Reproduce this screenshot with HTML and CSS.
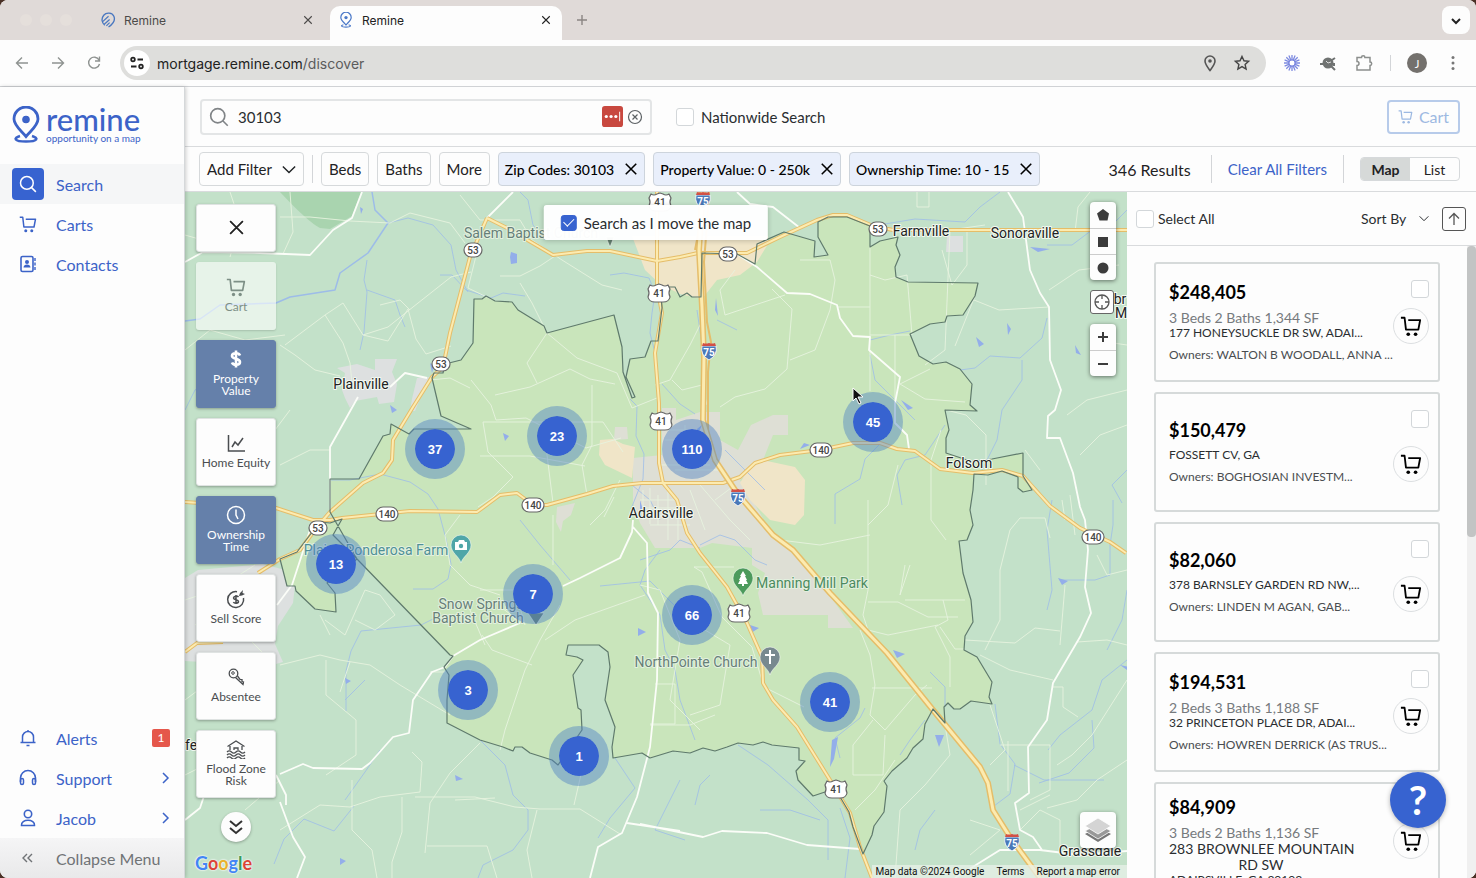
FILE: index.html
```html
<!DOCTYPE html>
<html lang="en">

<head>
    <meta charset="UTF-8">
    <meta name="viewport" content="width=device-width, initial-scale=1.0">
    <title>Remine</title>
    <link rel="stylesheet" href="styles.css">
</head>

<body>
    <!-- shared icons -->
    <svg class="defs" aria-hidden="true">
        <symbol id="i-cart" viewBox="0 0 24 24">
            <path d="M1 3h4l1.500 13h13.500l2-10.500H9" fill="none" stroke="currentColor" stroke-width="2" stroke-linejoin="round" />
            <circle cx="9" cy="21" r="2" fill="currentColor" />
            <circle cx="17" cy="21" r="2" fill="currentColor" />
        </symbol>
        <symbol id="i-close" viewBox="0 0 24 24">
            <path d="M3 3l18 18M21 3L3 21" fill="none" stroke="currentColor" stroke-width="2.600" />
        </symbol>
        <symbol id="i-search" viewBox="0 0 24 24">
            <circle cx="10.500" cy="10.500" r="8.500" fill="none" stroke="currentColor" stroke-width="2" />
            <path d="M16.500 16.500l6 6" stroke="currentColor" stroke-width="2" />
        </symbol>
        <symbol id="i-pin" viewBox="0 0 28 37">
            <path d="M14 30C9 24 2 19 2 12.500a12 12 0 0 1 24 0C26 19 19 24 14 30z" fill="none" stroke="currentColor" stroke-width="2.800" />
            <circle cx="14" cy="13" r="3.800" fill="currentColor" />
            <path d="M8 29.500c-7 2-6 5.500 6 5.500s13-3.500 6-5.500" fill="none" stroke="currentColor" stroke-width="2.600" />
        </symbol>
        <symbol id="i-down" viewBox="0 0 16 10">
            <path d="M1 1.500l7 7 7-7" fill="none" stroke="currentColor" stroke-width="1.600" />
        </symbol>
    </svg>

    <div class="window">
        <div class="tabs">
            <div class="lights"><span></span><span></span><span></span></div>
            <div class="tab">
                <svg class="tab-icon" viewBox="0 0 28 30"><path d="M8 25C2 20 1 12 6 6s16-5 19 2-1 14-10 20" fill="none" stroke="#4a78c0" stroke-width="2.500" /><path d="M4 18L15 8M7 23L17 14M11 26l6-6" stroke="#4a78c0" stroke-width="2.200" /></svg>
                <span>Remine</span>
                <button class="tab-close" aria-label="Close tab"><svg><use href="#i-close" /></svg></button>
            </div>
            <div class="tab tab-active">
                <svg class="tab-icon"><use href="#i-pin" /></svg>
                <span>Remine</span>
                <button class="tab-close" aria-label="Close tab"><svg><use href="#i-close" /></svg></button>
            </div>
            <button class="tab-new" aria-label="New tab"><svg viewBox="0 0 12 12"><path d="M6 1v10M1 6h10" stroke="#8b8583" stroke-width="1.400" /></svg></button>
            <button class="tab-menu" aria-label="Search tabs"><svg viewBox="0 0 10 7"><path d="M1 1l4 4 4-4" fill="none" stroke="#222" stroke-width="2" /></svg></button>
        </div>

        <div class="toolbar">
            <button aria-label="Back"><svg viewBox="0 0 20 20"><path d="M16 10H5M10 4.500L4.500 10l5.500 5.500" fill="none" stroke="#8f9391" stroke-width="1.400" /></svg></button>
            <button aria-label="Forward"><svg viewBox="0 0 20 20"><path d="M4 10h11M10 4.500l5.500 5.500-5.500 5.500" fill="none" stroke="#8f9391" stroke-width="1.400" /></svg></button>
            <button aria-label="Reload"><svg viewBox="0 0 20 20"><path d="M15 7a5.500 5.500 0 1 0 .5 4M15.500 3.500v4.500H11" fill="none" stroke="#8f9391" stroke-width="1.400" /></svg></button>
            <div class="address">
                <span class="site"><svg viewBox="0 0 16 16"><g fill="none" stroke="#222" stroke-width="1.800"><circle cx="4" cy="4.500" r="1.800" /><path d="M8.500 4.500H14M2 11.500h5.500" /><circle cx="12" cy="11.500" r="1.800" /></g></svg></span>
                <span class="url">mortgage.remine.com<i>/discover</i></span>
                <button aria-label="Location"><svg viewBox="0 0 20 20"><path d="M10 17.500C7 13.500 5 11 5 8a5 5 0 0 1 10 0c0 3-2 5.500-5 9.500z" fill="none" stroke="#555" stroke-width="1.600" /><circle cx="10" cy="8" r="1.800" fill="#555" /></svg></button>
                <button aria-label="Bookmark"><svg viewBox="0 0 20 20"><path d="M10 3.500l2 4.300 4.600.500-3.500 3.100 1 4.600L10 13.600 5.900 16l1-4.600-3.500-3.100 4.600-.5z" fill="none" stroke="#444" stroke-width="1.400" /></svg></button>
            </div>
            <button aria-label="Burst extension"><svg viewBox="0 0 20 20"><path d="M10 2v16M2 10h16M4.300 4.300l11.400 11.400M15.700 4.300L4.300 15.700M6.900 2.600l6.200 14.800M13.100 2.600L6.900 17.400M2.600 6.900l14.800 6.200M17.400 6.900L2.600 13.100" stroke="#7d8ae0" stroke-width="1.300" /><circle cx="10" cy="10" r="3" fill="#fff" stroke="#7d8ae0" /></svg></button>
            <button aria-label="Search extension"><svg viewBox="0 0 20 20"><circle cx="10" cy="10" r="5.500" fill="#707372" /><path d="M2 11h4M13 13l4 4M14 7l3-2M16 10v3" stroke="#707372" stroke-width="2" /><path d="M8 8l2 2 3-1" stroke="#ddd" fill="none" /></svg></button>
            <button aria-label="Extensions"><svg viewBox="0 0 20 20"><path d="M3 4.500h4.500a1.700 1.700 0 0 1 3.400 0H16V9a1.700 1.700 0 0 1 0 3.400V17H3v-4.500a2 2 0 0 0 0-4z" fill="none" stroke="#8c8f8d" stroke-width="1.500" /></svg></button>
            <span class="bar"></span>
            <button class="avatar" aria-label="Profile">J</button>
            <button aria-label="Menu"><svg viewBox="0 0 20 20" fill="#777"><circle cx="10" cy="4.500" r="1.500" /><circle cx="10" cy="10" r="1.500" /><circle cx="10" cy="15.500" r="1.500" /></svg></button>
        </div>

        <div class="app">
            <nav class="sidebar">
                <a class="logo" href="#">
                    <svg><use href="#i-pin" /></svg>
                    <span class="logo-text"><b>remine</b><small>opportunity on a map</small></span>
                </a>
                <a class="nav-item nav-active" href="#"><span class="nav-icon"><svg><use href="#i-search" /></svg></span>Search</a>
                <a class="nav-item" href="#"><span class="nav-icon"><svg><use href="#i-cart" /></svg></span>Carts</a>
                <a class="nav-item" href="#"><span class="nav-icon"><svg viewBox="0 0 18 18"><rect x="2" y="1.500" width="12" height="15" rx="1.500" fill="none" stroke="currentColor" stroke-width="1.600" /><circle cx="8" cy="7" r="2" fill="currentColor" /><path d="M4.500 12.500c0-4 7-4 7 0z" fill="currentColor" /><path d="M16 3v12" stroke="currentColor" stroke-width="1.400" stroke-dasharray="3 1.500" /></svg></span>Contacts</a>

                <a class="nav-item nav-bottom" href="#"><span class="nav-icon"><svg viewBox="0 0 18 18"><path d="M3.500 13V8a5.500 5.500 0 0 1 11 0v5M1.500 13.500h15M9 1v2M7.500 16.500h3" fill="none" stroke="currentColor" stroke-width="1.500" /></svg></span>Alerts<em class="badge">1</em></a>
                <a class="nav-item" href="#"><span class="nav-icon"><svg viewBox="0 0 18 18"><path d="M1.500 13V9a7.500 7.500 0 0 1 15 0v4" fill="none" stroke="currentColor" stroke-width="1.600" /><rect x="1.500" y="9.500" width="3" height="6" rx="1.500" fill="none" stroke="currentColor" stroke-width="1.500" /><rect x="13.500" y="9.500" width="3" height="6" rx="1.500" fill="none" stroke="currentColor" stroke-width="1.500" /></svg></span>Support<svg class="nav-arrow" viewBox="0 0 8 12"><path d="M1 1l5 5-5 5" /></svg></a>
                <a class="nav-item" href="#"><span class="nav-icon"><svg viewBox="0 0 18 18"><circle cx="9" cy="5" r="3.700" fill="none" stroke="currentColor" stroke-width="1.600" /><path d="M2.500 16.500c-1-7 14-7 13 0z" fill="none" stroke="currentColor" stroke-width="1.600" /></svg></span>Jacob<svg class="nav-arrow" viewBox="0 0 8 12"><path d="M1 1l5 5-5 5" /></svg></a>
                <button class="nav-item collapse"><span class="nav-icon"><svg viewBox="0 0 18 18"><path d="M8 5L4 9l4 4M13 5L9 9l4 4" fill="none" stroke="currentColor" stroke-width="1.400" /></svg></span>Collapse Menu</button>
            </nav>

            <main>
                <header class="search-row">
                    <div class="search-box">
                        <svg class="search-icon"><use href="#i-search" /></svg>
                        <input type="text" value="30103" aria-label="Search location">
                        <svg class="vault" viewBox="0 0 22 22"><rect width="22" height="22" rx="3" fill="#c8483f" /><g fill="#fff"><circle cx="4.500" cy="11" r="1.700" /><circle cx="9.500" cy="11" r="1.700" /><circle cx="14.500" cy="11" r="1.700" /><rect x="18" y="6" width="1" height="10" /></g></svg>
                        <button class="clear" aria-label="Clear search"><svg viewBox="0 0 16 16"><g fill="none" stroke="#5c6164" stroke-width="1.200"><circle cx="8" cy="8" r="6.500" /><path d="M5.500 5.500l5 5M10.500 5.500l-5 5" /></g></svg></button>
                    </div>
                    <label class="check nationwide"><input type="checkbox">Nationwide Search</label>
                    <button class="cart-btn"><svg><use href="#i-cart" /></svg>Cart</button>
                </header>

                <div class="filters">
                    <button class="filter add-filter">Add Filter<svg><use href="#i-down" /></svg></button>
                    <span class="bar"></span>
                    <button class="filter">Beds</button>
                    <button class="filter">Baths</button>
                    <button class="filter">More</button>
                    <button class="filter chip">Zip Codes: 30103<svg><use href="#i-close" /></svg></button>
                    <button class="filter chip">Property Value: 0 - 250k<svg><use href="#i-close" /></svg></button>
                    <button class="filter chip">Ownership Time: 10 - 15<svg><use href="#i-close" /></svg></button>
                    <div class="filters-right">
                        <span class="results">346 Results</span>
                        <span class="bar"></span>
                        <a class="clear-all" href="#">Clear All Filters</a>
                        <span class="bar"></span>
                        <div class="toggle"><button class="on">Map</button><button>List</button></div>
                    </div>
                </div>

                <div class="content">
                    <section class="map">
                        <svg class="map-svg" viewBox="185 192 942 686" preserveAspectRatio="xMidYMid slice">
                            <defs>
                                <path id="zip" d="M330 512V479h29l24-43 7-2 1-10 18 10 5-5h57l-30-13-9-38 2-5h9l2-9 16-4 12-17 1-44h8l4-3 9 5 17 1 6 8 26 16 3 7 67-18 8 32 1 25 9 26 3-1-9-20 4-18 15-2 6-16h7l4-33-1-13 8-8h6l5 10 7-4 5 4 9 0 1-44 35 1 18 10 2-20 27-12 31 9-1 16 14-2-10-18v-15l10-5h19l23 9v21l10-6 18-4-2 8 4 10-5 12 1 10 12 5 70 1-3 13-12 19-16 1-2 6-15 2-20 10 9 22 14 8 13-2 14 7 12 15-2 21 7 6-32-1 4 20-3 8v15l27 9 19-3 31-6v23l9 14-9 2-5-4v-11l-16-6-14 4-14-1-1 16-3 20 3 15-6 15-8 1 4 32 8 27 2 22-8 14-1 14 13 7 15 25-3 15 3 7-21-3-11 8h-6l-6-6-4 4 1 16-12-14-8 15-2 15-10 9-6 10-15 13-8 10 3 5-3 26-10 14-2 9-9 19-10-27-4-15-16-27-8 7-12 4-15-16-2-9 9-10-6-1v-12l-27-3-9-3-10 3-15-2-11 4-12 4-12-3-13 5-17-2-23 7-8-5-29 5-1-11 3-20-10-27 5-33-2-15-9-7h-31l-2 10 11 2 6 3-10 15 5 33 3 2 1 20-24 35-6-5-22-7-8-6h-7l-2 4-10-4-23-7-33-17v-23l2-25-5-8 9-11-3-1-93-96-24-24 9-16-12 4-10-1-10 13-13 17-17 7 7 27h8l1 5 19 18 21 3-1-19-8-10 30-24z" />
                                <path id="hw" d="M487 218l-17 39-20 76-7 34-11 10-19 30-20 33-1 20-9 13-20 10-33 29-13 15-17 23-20 9-22 14M185 502l91 6 37 12h17l12-2 68-7 67 1 23-17 17-2 16 12h14l40-11 26-8 29-3h81l17-6 15-14 25-8 40-5 33-7h27l17 6 18 2 25 18 33 4 29-3 21 6 27 30 30 22 30 14 16 11M185 652l12-9 26-1M487 218l20 10 46 27 34-4h23l47 10 23-4 18-4h49l33-16 37-17 16-5h14l26 11 20 4h234M657 190v97l5 26-7 40 4 50v60l4 20 14 17 10 33 13 20 27 34 20 36 15 34 1 26 10 17 24 27 33 53 20 33 10 34 12 31" />
                                <path id="i75" d="M703 190l-4 60 3 57 2 50-1 63 12 40 22 33 36 42 20 15 37 43 57 60 46 57 47 57 8 16 5 27 17 27 30 41" />
                                <path id="us" d="M-9-8q3 2 6 0l3-1 3 1q3 2 6 0l2 4q-2 4 0 8-1 5-7 5H-4q-6 0-7-5 2-4 0-8z" fill="#fff" stroke="#666" stroke-width="1.200" />
                                <rect id="st" x="-9" y="-7" width="18" height="14" rx="7" fill="#fff" stroke="#666" stroke-width="1.200" />
                                <rect id="st3" x="-11" y="-7" width="22" height="14" rx="7" fill="#fff" stroke="#666" stroke-width="1.200" />
                                <g id="is"><path d="M-7-5h14q2 9-7 14-9-5-7-14z" fill="#4a78b8" stroke="#fff" stroke-width=".8" /><path d="M-6-8q3 1 6 0 3 1 6 0l1 3H-7z" fill="#d25046" /></g>
                            </defs>
                            <rect x="185" y="192" width="942" height="686" fill="#c3e1c9" />
                            <path d="M280 192h81l-9 24-22 13-10-1q-12-6-40-36z" fill="#a9d4af" />

                            <!-- built-up areas -->
                            <g fill="#dde0e0">
                                <path d="M375 359h22l-5 13 5 12-3 18-15 2-2-7-22 4-5 7-5-10-3-8 3-17-8-5 20-4 18 6zM417 378l12-1-14 34h-5l2-12z" />
                                <path d="M185 578l13-8 65-6 22 6 10 15-2 18-15 23-3 18 8 18-14 4-84-5zM947 236h16v16h-17z" />
                            </g>

                            <use href="#zip" class="zip-area" />
                            <g fill="#dedfd5">
                                <path d="M633 458l29-3V408h14v12l24-8h20v28l18 10 13-25 22-10h15v20h-15l-10 25-23 20 20 33 13 25 20 15 37 43 23 32h-25v-13h-65l-5-22 7-20-13-8v-17l-40-5-12 5h-45l-15-25-7-20zM557 507l18-4-4 12-8 6-2 11-5-10z" />
                                <path d="M615 427h12l1 12-14 1z" />
                            </g>
                            <g fill="#f0e5c8">
                                <path d="M752 463l15-2 28 6 10 13-1 35-9 10-25-5-20-20-10-17zM600 440l13-1 10 5 12 3-3 31-27-13-6-10zM632 236h136v8l-11 18-17 13-23 5-15 19-22-5-20-10-15-14z" />
                            </g>

                            <!-- water -->
                            <g class="river">
                                <path d="M372 192l3 18 13 13-20 30-28 20-5 17-45 7-14 6-56 2-20 14-15 2" stroke-width="1.500" />
                                <path d="M388 223l20-5 25 7 18 20 5 25 12 22M367 260l-3 20 3 12-3 40-4 18M367 290l28 10 5 15 5 12M440 275l12 0 14 15 25 8 12-5 22 3M185 410l10-20 25-15 15 10M520 192l8 8 5 25 12 15M610 275l14-2 25 5 6 15-3 20-2 20 5 20M630 399l7 7-1 30 8 18-1 25-12 30M330 480h20l30-6 30 8 18 12 10 15 8 30 5 25-3 15-15 10h-20M662 384l18 20 15 10M660 520l-10-20-18-15M441 615l-20 10-60 6-10 20-5 20 0 40M345 700l20-20M345 800l20-28 15-22M354 806l-20 25-30-12-20 20-10 25M480 740l25 25 8 30 15 15 0 20-15 20-30 15-5 13M615 758l20 30-25 30-12 20M680 780l-25 50 30 10M737 330l-20-10M702 345l-5-35M870 340l20-5 20-4 0 0M870 355l5 25 20 20 20 20M1000 192l-20 15-15 15-50-3-30 5M1127 210l-20 20-15 0-20 15-25 0M1047 318l-5 20-22 20-30-2-15 12-15 2M1022 360l0 20-20 30-5 30-15 30M1127 470l-15 15 10 18M1113 500l0 25-3 20 0 30-15 5h-35M1127 590l-5 30-15 30M1052 500l-5 30 5 60-5 20M880 444l-15 15-5 20-25 15 0 30M945 425l-20 30-20 5-8 15 5 30M930 672l15 15 0 20M900 755l10-15 15-20M995 704l5 40 15 20-5 30-20 15M1014 765l30 15 60 0M1127 660l-25 20-10 30-32 25-12 15M1092 720l2 28-25 25-30 10M738 745l30 20 40 35 20 20 0 40M695 805l5-20 10-10M760 810l30 0 30 10M845 878l5-40-10-30M915 850l5-20 15-20M700 545l20-10 15 5 20 20 12 5M640 560l30-10 10-10 20 8M660 550l-15 20-5 15 20 30 5 35 10 20 5 30 15 40M840 758l-5-20 25-20 5-10M725 450l40 40M600 586l50-5 25 25M520 520l20 25 30 35" />
                            </g>
                            <g fill="#93aeea">
                                <path d="M511 252l6 2v9l-6 1-1-7zM716 298l2 18-3-6zM702 425l-5 4 1 5zM1007 323l4 6-3 6zM976 337l8 7-5 3zM935 735h9l-5 12zM1058 578l10 3-6 4zM1030 247l20 2-12 3zM893 650l12 4-8 4zM360 207l3 2-2 5zM503 433l6 3-4 5zM832 740l6-3-4 22-4 8zM638 628l8 4-8 4zM750 625l9 3-8 5zM390 405l7 5-5 3zM430 363l4 3-2 7zM540 255l3 2zM901 400l12 8-5 2zM1120 665l10 2v5zM345 678l6 3-5 3zM340 858l6 3-6 4zM455 775l8 4-7 2zM800 449l4-6 6 2zM196 528l8 3-6 6zM1075 345l6 10-5-2zM640 500l3 10-3 2zM1079 340l2 8z" />
                            </g>

                            <!-- minor roads -->
                            <g class="minor">
                                <path d="M280 217h30l40 4 40 2 20-10 40 10 15 20M290 192l3 40-10 22M325 315l18-12 20 32 25-8 25-20 38-30 20-5M325 315l18 28 7 20 2 20M285 345l40-30M280 345l15 10 20 15 25 6M363 335l25 6 20-32 8 30 10 15 25-8M410 310l-10-10-20 5M460 195l20 25 40 0 12 20 30 20 40 25 20 5M478 248l-10 40 25 12M500 276h20l20-10 15-10M547 333l-15-30-12-20M547 333l30 25 40 15 15 35 25-10M547 333l-20 30 10 20M471 380l20 25 5 15 30-2 60 30 35-10M495 395l35-8 40-18 20 10 25 5M430 380l20-2 20 10M483 422h60l60 0 20 30M483 422l5 30 25 25-20 20-15 10M480 456h50l55 10M592 385l0 60-10 20 5 30M330 450h-20l-20 10-10 5M543 423l10 80M553 515l0 50M460 515l-15 20 5 30 20 20 30 10M480 590h35l10 35M470 610l15 35M560 605l-20 35-15 30-20 60-5 20M545 640l30-20 70-25M482 635l10 15 40 15M498 605l20 15M445 672h-15M320 615l10 20M325 620l20 15 20-45 15 5 15 20-20 15-20-10M280 665l40-10 20 5 30 5 30 20 50 30M326 660l0 35 30 25 0 35-30 20M340 692l10-30M352 780v50l20 20 5 28M280 830l40-25 30 2 30-10 40-5 2-30-10-10M480 743l-30 30-20 30-5 50M402 797v35l-10 30v16M415 797h60l40 10 25 2 40 0 40 25M537 810l-10 40 5 28M582 770l-8 35M427 846h60l10 32M455 800l40-2M705 315l-15 30-20 35-15 5M672 380l10 10 20-5 5 20M720 407l15-10 30-8 22-20 5-60-20-20M785 295l-60 20-5-25 15-20M800 260h30l5 20-5 30-15 40-25 10M870 246v145M870 275l15 5 22-5 5 60M870 335h40M838 307h32M895 335v70M900 384l30-15M900 384l25 15 40 3M985 225l-35 5-5 120-20 15M942 250l10 35 15-20 0-35M917 192v15h12v-15M1049 307l-50 3-25-10M1049 290l30-20 40-5M975 296l-20 50M946 410l20 5 20 20 0 50M1040 470l-15-20M946 540l-15-20 0-60 10-30M868 500v90l-5 25 5 15 20 5 50-10M868 602h30l30 15 30 0M868 525l20-20 10-40M780 540l40 5 50-10M905 565l-5 30 10-30M943 600l5 20-13 7 15 30v30M905 600h60M940 627l15 22h9M860 630l10 25 5 30-5 30 15 15 30-35 12-10M872 688h60M873 720l-20 25 0 30h30l2-40M702 572l-8-5 40 0M702 572l20 45 30 30 12 40 40 20M640 585l20 5 20 50-10 60 30 30M655 684h20v40h-25M705 630l25 15-10 60-30 10M650 725h40l25-10M620 480l-15 30-15 15M614 497l-10 20M965 640l50 3 20-15 25 3M980 655l30 15 43 10M1053 687h10v20l15 10M990 705l15 45-15 15M1000 745h50v45l-20 10M1008 741l0 50M1020 810l30-15M895 760l-20 30-20 20M945 725l5 30-25 30-25 25-5 68M970 820l30 10-30 25M1020 830l20-20 20 10 0 30M1080 455l20-20 27-10M1127 570l-20 5-10-20M1127 645l-20-5-30 2M1127 680l-35 55-20 20-15 10M1127 760l-30 20-20 20-30 8M1070 495l5 40M985 650l15-30 0-50 10-40 10-12 25 0 5 20M1065 585l-5 60M1062 500l3 20M185 235l35 10 55-15M230 192l10 30-10 35M185 350l25-20 35 10 40-5M260 450l30-40M185 600l30-10 40-25M195 625l50-45M250 640l20 20M185 700l20-15 25-20M185 775l30-15 25-30M245 810l35-30M1090 192l-12 15-3 25M1127 345l-20-3-7 20M1127 390l-40 10-20 15" />
                                <path d="M643 490v30M650 488v36M658 495v30M668 490v50M678 515v25M640 500h35M642 508h38M642 516h40M650 525h40M690 490l15 40M700 485l30 35 20 20M735 485l-20 15M685 425v30M665 430h30M665 440h28M660 465h50M675 470h45" />
                            </g>
                            <g class="white-road">
                                <path d="M487 218l26-26M185 262l18-10 57 1 50 2 23-25 19-12 10-26M737 192l13 12 23 3 27 21M737 254l20 13 30 26 23 1 27 11 3 13 13 18 17 1-1 13 31 27-5 26v20l12 12 2 14M1008 192l15 25 7 53 10 23 9 14 1 53 11 30-6 20-7 6-1 22h13l13 35 7 34 5 13 3 30-3 37 6 26-11 24-27 46-6 37-19 27 1 46-14 10 5 27 13 7 9 13M955 878l45-28h40l40 5 47-4M640 824l63 13 19-6 45 2 40 12 53 4M590 878l8-31 24-14 15-36 13-50 7-67 1-67-10-20-1-50-14-16M627 823l53 8M633 520l-1 12-12 26-40 20-17 8M520 623l-40 17-27 16-8 11-13 5-19 28-4 33-16 4-23 26-8 6-49-1-10-4-23 10M280 802l13 35 12 20-8 21M358 397l-28 50v65M390 387l15-14 22 5M185 820l15-12 5-15M276 775l10 20 0 10M310 530l-18 55-15 20" />
                            </g>

                            <!-- highways -->
                            <use href="#hw" class="hw-edge" />
                            <use href="#hw" class="hw-fill" />
                            <path class="i75-thin" d="M709 192l-3 45-2 25 3 60 4 20-3 30 0 60M695 250l4-20 0-38" />
                            <use href="#i75" class="i75-edge" />
                            <use href="#i75" class="i75-fill" />
                            <use href="#zip" class="zip-line" />

                            <!-- shields -->
                            <g class="shield">
                                <use href="#us" x="660" y="202" /><text x="660" y="206">41</text>
                                <use href="#us" x="659" y="293" /><text x="659" y="297">41</text>
                                <use href="#us" x="661" y="421" /><text x="661" y="425">41</text>
                                <use href="#us" x="739" y="613" /><text x="739" y="617">41</text>
                                <use href="#us" x="836" y="789" /><text x="836" y="793">41</text>
                                <use href="#st" x="473" y="250" /><text x="473" y="254">53</text>
                                <use href="#st" x="441" y="364" /><text x="441" y="368">53</text>
                                <use href="#st" x="318" y="528" /><text x="318" y="532">53</text>
                                <use href="#st" x="728" y="254" /><text x="728" y="258">53</text>
                                <use href="#st" x="878" y="229" /><text x="878" y="233">53</text>
                                <use href="#st3" x="387" y="514" /><text x="387" y="518">140</text>
                                <use href="#st3" x="533" y="505" /><text x="533" y="509">140</text>
                                <use href="#st3" x="821" y="450" /><text x="821" y="454">140</text>
                                <use href="#st3" x="1093" y="537" /><text x="1093" y="541">140</text>
                                <g class="inter">
                                    <use href="#is" x="703" y="200" /><text x="703" y="205">75</text>
                                    <use href="#is" x="709" y="351" /><text x="709" y="356">75</text>
                                    <use href="#is" x="738" y="497" /><text x="738" y="502">75</text>
                                    <use href="#is" x="1012" y="842" /><text x="1012" y="847">75</text>
                                </g>
                            </g>

                            <!-- places -->
                            <g class="place">
                                <text x="361" y="389">Plainville</text>
                                <text x="661" y="518">Adairsville</text>
                                <text x="921" y="236">Farmville</text>
                                <text x="1025" y="238">Sonoraville</text>
                                <text x="969" y="468">Folsom</text>
                                <text x="1090" y="856">Grassdale</text>
                                <text x="1120" y="304">br</text>
                                <text x="1121" y="318">M</text>
                                <text x="191" y="750">fe</text>
                            </g>
                            <g class="place poi">
                                <text x="531" y="238">Salem Baptist Church</text>
                                <text x="481" y="609">Snow Springs</text>
                                <text x="478" y="623">Baptist Church</text>
                                <text x="696" y="667">NorthPointe Church</text>
                                <text class="teal" x="376" y="555">Plains Ponderosa Farm</text>
                                <text class="green" x="812" y="588">Manning Mill Park</text>
                            </g>
                            <g stroke="#fff" stroke-width=".5">
                                <path d="M461 563c-2-7-10-10-10-18a10 10 0 0 1 20 0c0 8-8 11-10 18z" fill="#4fa6a8" />
                                <path d="M743 596c-2-7-10-10-10-18a10 10 0 0 1 20 0c0 8-8 11-10 18z" fill="#4c9a5c" />
                                <path d="M770 675c-2-7-10-10-10-18a10 10 0 0 1 20 0c0 8-8 11-10 18z" fill="#78898f" />
                                <path d="M536 625l-8-12h16zM610 247l-4-10h8z" fill="#63806f" />
                            </g>
                            <g fill="#fff">
                                <path d="M455 542h3l1-2h5l1 2h2v8h-12z" /><circle cx="461" cy="546" r="2.200" fill="#4fa6a8" />
                                <path d="M743 571l3 5h-1l2 4h-1l2 4h-4v2h-2v-2h-4l2-4h-1l2-4h-1z" />
                                <path d="M769 650h2v4h4v2h-4v8h-2v-8h-4v-2h4z" />
                            </g>
                        </svg>

                        <button class="cluster c1">37</button>
                        <button class="cluster c2">23</button>
                        <button class="cluster c3">110</button>
                        <button class="cluster c4">45</button>
                        <button class="cluster c5">13</button>
                        <button class="cluster c6">7</button>
                        <button class="cluster c7">66</button>
                        <button class="cluster c8">3</button>
                        <button class="cluster c9">41</button>
                        <button class="cluster c10">1</button>

                        <label class="check move-search"><input type="checkbox" checked>Search as I move the map</label>

                        <div class="tools">
                            <button class="tool tool-close" aria-label="Close"><svg><use href="#i-close" /></svg></button>
                            <button class="tool tool-off" disabled><svg><use href="#i-cart" /></svg>Cart</button>
                            <button class="tool tool-on"><svg viewBox="0 0 20 20"><path d="M14 6.500C13 3.500 6 3.500 6 7c0 3.500 8 2 8 6 0 3.500-7 3.500-8 .500M10 1.500v17" fill="none" stroke="currentColor" stroke-width="2.600" /></svg>Property Value</button>
                            <button class="tool"><svg viewBox="0 0 20 20"><path d="M2.500 2v16H19M6 14l3-5 3 3 5-7" fill="none" stroke="currentColor" stroke-width="1.500" /></svg>Home Equity</button>
                            <button class="tool tool-on"><svg viewBox="0 0 20 20"><circle cx="10" cy="10" r="8.500" fill="none" stroke="currentColor" stroke-width="1.500" /><path d="M10 4.500V10l2 4" fill="none" stroke="currentColor" stroke-width="1.500" /></svg>Ownership Time</button>
                            <button class="tool"><svg viewBox="0 0 20 20"><path d="M11 2.700A8 8 0 1 0 17.500 9M12.500 8c-1.500-1.600-5-.8-5 1 0 2.200 5 1.200 5 3.500 0 2-4 2.200-5.200.6M10 6v9" fill="none" stroke="currentColor" stroke-width="1.500" /><path d="M13 7l1-3 3-3-.5 3 2.500 1-3 1.500z" fill="currentColor" /></svg>Sell Score</button>
                            <button class="tool"><svg viewBox="0 0 20 20"><circle cx="7.500" cy="6.500" r="4.300" fill="none" stroke="currentColor" stroke-width="1.300" /><circle cx="7" cy="6" r="1.300" fill="none" stroke="currentColor" /><path d="M9.500 10.500l7.500 7 .500-2.500-1.500-.5v-1.800l-2-.2-2.500-3.500" fill="none" stroke="currentColor" stroke-width="1.300" /></svg>Absentee</button>
                            <button class="tool"><svg viewBox="0 0 20 20"><path d="M1.500 7.500L10 2l8.500 5.500M4 7v4M16 7v4M8 11V9h4v2M1 13c1.500-1.500 3-1.500 4.500 0s3 1.500 4.500 0 3-1.500 4.500 0 3 1.500 4.500 0M1 16c1.500-1.500 3-1.500 4.500 0s3 1.500 4.500 0 3-1.500 4.500 0 3 1.500 4.500 0M1 19c1.500-1.500 3-1.500 4.500 0s3 1.500 4.500 0 3-1.500 4.500 0 3 1.500 4.500 0" fill="none" stroke="currentColor" stroke-width="1.300" /></svg>Flood Zone Risk</button>
                            <button class="more-tools" aria-label="More tools"><svg viewBox="0 0 14 16"><path d="M1 2l6 5 6-5M1 9l6 5 6-5" fill="none" stroke="#333" stroke-width="2" /></svg></button>
                        </div>

                        <div class="map-controls">
                            <div class="group">
                                <button aria-label="Draw polygon"><svg viewBox="0 0 12 12"><path d="M6 0l6 4.500-1.500 7h-8L0 4.500z" /></svg></button>
                                <button aria-label="Draw rectangle"><svg viewBox="0 0 12 12"><rect x="1" y="1" width="10" height="10" /></svg></button>
                                <button aria-label="Draw circle"><svg viewBox="0 0 12 12"><circle cx="6" cy="6" r="5.500" /></svg></button>
                            </div>
                            <button class="locate" aria-label="My location"><svg viewBox="0 0 16 16"><g fill="none" stroke="#555" stroke-width="1.300"><circle cx="8" cy="8" r="7" /><path d="M8 1v4M8 11v4M1 8h4M11 8h4" /></g></svg></button>
                            <div class="group">
                                <button aria-label="Zoom in"><svg viewBox="0 0 12 12"><path d="M5 1h2v4h4v2H7v4H5V7H1V5h4z" /></svg></button>
                                <button aria-label="Zoom out"><svg viewBox="0 0 12 12"><rect x="1" y="5" width="10" height="2" /></svg></button>
                            </div>
                        </div>
                        <button class="layers" aria-label="Layers"><svg viewBox="0 0 26 26"><path d="M0 17l13 8 13-8-13-7z" fill="#777" /><path d="M0 14l13 8 13-8-13-7z" fill="#999" stroke="#fff" stroke-width=".8" /><path d="M0 9l13 8 13-8-13-8z" fill="#d4d4d4" stroke="#fff" stroke-width=".8" /></svg></button>

                        <svg class="pointer" viewBox="0 0 12 18"><path d="M1 1v13l3-3 3 6 2-1-3-6h5z" fill="#111" stroke="#fff" /></svg>
                        <div class="google"><span>G</span><span>o</span><span>o</span><span>g</span><span>l</span><span>e</span></div>
                        <div class="legal"><span>Map data ©2024 Google</span><a href="#">Terms</a><a href="#">Report a map error</a></div>
                    </section>

                    <aside class="list">
                        <div class="list-head">
                            <label class="check"><input type="checkbox">Select All</label>
                            <div class="sort">
                                <select aria-label="Sort"><option>Sort By</option></select>
                                <svg><use href="#i-down" /></svg>
                            </div>
                            <button class="sort-dir" aria-label="Sort ascending"><svg viewBox="0 0 14 14"><path d="M7 13V2M2 6.500L7 1.500l5 5" fill="none" stroke="#555" stroke-width="1.300" /></svg></button>
                        </div>
                        <div class="cards">
                            <article class="card">
                                <input class="pick" type="checkbox" aria-label="Select $248,405">
                                <div class="info">
                                    <h3>$248,405</h3>
                                    <p class="spec">3 Beds 2 Baths 1,344 SF</p>
                                    <p class="addr">177 HONEYSUCKLE DR SW, ADAI...</p>
                                    <p class="owner">Owners: WALTON B WOODALL, ANNA ...</p>
                                </div>
                                <button class="add" aria-label="Add to cart"><svg><use href="#i-cart" /></svg></button>
                            </article>
                            <article class="card">
                                <input class="pick" type="checkbox" aria-label="Select $150,479">
                                <div class="info">
                                    <h3>$150,479</h3>
                                    <p class="addr">FOSSETT CV, GA</p>
                                    <p class="owner">Owners: BOGHOSIAN INVESTM...</p>
                                </div>
                                <button class="add add-short" aria-label="Add to cart"><svg><use href="#i-cart" /></svg></button>
                            </article>
                            <article class="card">
                                <input class="pick" type="checkbox" aria-label="Select $82,060">
                                <div class="info">
                                    <h3>$82,060</h3>
                                    <p class="addr">378 BARNSLEY GARDEN RD NW,...</p>
                                    <p class="owner">Owners: LINDEN M AGAN, GAB...</p>
                                </div>
                                <button class="add add-short" aria-label="Add to cart"><svg><use href="#i-cart" /></svg></button>
                            </article>
                            <article class="card">
                                <input class="pick" type="checkbox" aria-label="Select $194,531">
                                <div class="info">
                                    <h3>$194,531</h3>
                                    <p class="spec">2 Beds 3 Baths 1,188 SF</p>
                                    <p class="addr">32 PRINCETON PLACE DR, ADAI...</p>
                                    <p class="owner">Owners: HOWREN DERRICK (AS TRUS...</p>
                                </div>
                                <button class="add" aria-label="Add to cart"><svg><use href="#i-cart" /></svg></button>
                            </article>
                            <article class="card">
                                <div class="info">
                                    <h3>$84,909</h3>
                                    <p class="spec">3 Beds 2 Baths 1,136 SF</p>
                                    <p class="addr-full">283 BROWNLEE MOUNTAIN<br>RD SW</p>
                                    <p class="addr">ADAIRSVILLE, GA 30103</p>
                                </div>
                                <button class="add add-tall" aria-label="Add to cart"><svg><use href="#i-cart" /></svg></button>
                            </article>
                        </div>
                        <div class="scrollbar"><span></span></div>
                    </aside>
                </div>
            </main>
        </div>
        <button class="help" aria-label="Help">?</button>
    </div>
</body>

</html>
```
FILE: styles.css
```css
* {
    margin: 0;
    padding: 0;
    box-sizing: border-box;
}

body {
    height: 100vh;
    overflow: hidden;
    background-color: #4a3026;
    font-family: Lato, sans-serif;
    font-size: 15px;
    color: #2a2d30;
}

button, input, select {
    border: 0;
    background: none;
    font: inherit;
    color: inherit;
}

a {
    color: inherit;
    text-decoration: none;
}

.defs {
    position: absolute;
    width: 0;
    height: 0;
}

.window {
    display: flex;
    flex-direction: column;
    height: 100vh;
    border-radius: 8px;
    overflow: hidden;
    background-color: #fdfdfd;
}

/* browser tabs */
.tabs {
    display: flex;
    align-items: flex-end;
    height: 40px;
    padding-right: 6px;
    background-color: #e0dad8;
    font-family: Inter, sans-serif;
    font-size: 12px;
}

.lights {
    display: flex;
    gap: 8px;
    width: 86px;
    padding: 0 0 14px 20px;
}

.lights span {
    width: 12px;
    height: 12px;
    border-radius: 50%;
    background-color: #e5dfdb;
}

.tab {
    display: flex;
    align-items: center;
    gap: 8px;
    width: 244px;
    height: 34px;
    padding: 0 17px 6px 14px;
    color: #4c4a49;
}

.tab-active {
    width: 232px;
    padding: 0 11px 6px 8px;
    border-radius: 10px 10px 0 0;
    background-color: #fdfdfd;
    color: #222;
}

.tab-icon {
    width: 16px;
    height: 16px;
    color: #4a78c8;
}

.tab-close {
    display: flex;
    margin-left: auto;
}

.tab-close svg {
    width: 10px;
    height: 10px;
}

.tab-new {
    padding: 0 0 14px 14px;
}

.tab-new svg {
    display: block;
    width: 12px;
    height: 12px;
}

.tab-menu {
    width: 28px;
    height: 28px;
    margin: 0 0 6px auto;
    border-radius: 8px;
    background-color: #fdfdfd;
}

.tab-menu svg {
    width: 10px;
    height: 7px;
}

/* browser toolbar */
.toolbar {
    display: flex;
    align-items: center;
    gap: 16px;
    height: 47px;
    padding: 0 13px 0 12px;
    border-bottom: 1px solid #d0d2d5;
}

.toolbar button {
    width: 20px;
    height: 20px;
}

.toolbar button svg {
    display: block;
    width: 20px;
    height: 20px;
}

.address {
    display: flex;
    flex: 1;
    align-items: center;
    gap: 12px;
    height: 34px;
    padding: 0 14px 0 4px;
    border-radius: 17px;
    background-color: #dededc;
}

.site {
    display: flex;
    align-items: center;
    justify-content: center;
    width: 26px;
    height: 26px;
    border-radius: 50%;
    background-color: #fff;
}

.site svg {
    width: 16px;
    height: 16px;
}

.url {
    flex: 1;
    margin-left: -5px;
    font-family: Inter, sans-serif;
    font-size: 14px;
    color: #222;
}

.url i {
    font-style: normal;
    color: #5c5c5c;
}

.bar {
    width: 1px;
    height: 28px;
    background-color: #d3d5d8;
}

.toolbar .bar {
    height: 16px;
}

.toolbar .avatar {
    border-radius: 50%;
    background-color: #74716d;
    color: #fff;
    font-size: 11px;
}

/* app */
.app {
    display: flex;
    flex: 1;
    min-height: 0;
}

.sidebar {
    display: flex;
    flex-direction: column;
    width: 185px;
    border-right: 1px solid #d5d8da;
    box-shadow: 1px 0 4px rgba(0, 0, 0, 0.2);
    z-index: 2;
    color: #3c63c8;
    font-size: 16px;
}

.logo {
    display: flex;
    gap: 6px;
    height: 77px;
    padding: 19px 12px 0;
}

.logo svg {
    width: 28px;
    height: 38px;
}

.logo-text b {
    display: block;
    font-size: 31px;
    font-weight: 500;
    line-height: 26px;
}

.logo-text small {
    display: block;
    font-size: 10px;
    line-height: 12px;
    white-space: nowrap;
}

.nav-item {
    display: flex;
    align-items: center;
    gap: 12px;
    width: 100%;
    height: 40px;
    padding: 0 14px 0 12px;
    text-align: left;
}

.nav-active {
    background-color: #f5f6f7;
}

.nav-icon {
    display: flex;
    align-items: center;
    justify-content: center;
    width: 32px;
    height: 32px;
    border-radius: 4px;
}

.nav-active .nav-icon {
    background-color: #3763d0;
    color: #fff;
}

.nav-icon svg {
    width: 18px;
    height: 18px;
}

.nav-bottom {
    margin-top: auto;
}

.badge {
    width: 18px;
    margin-left: auto;
    border-radius: 2px;
    background-color: #e5574b;
    color: #fff;
    font-size: 12px;
    font-style: normal;
    line-height: 18px;
    text-align: center;
}

.nav-arrow {
    width: 8px;
    height: 12px;
    margin-left: auto;
    fill: none;
    stroke: #3c63c8;
    stroke-width: 1.5;
}

.collapse {
    background: linear-gradient(#f5f5f6, #e9e9ea);
    color: #707376;
}

main {
    display: flex;
    flex: 1;
    flex-direction: column;
    min-width: 0;
}

/* search row */
.search-row {
    display: flex;
    align-items: center;
    height: 60px;
    padding: 0 16px 0 15px;
    border-bottom: 1px solid #d9dbdd;
}

.search-box {
    display: flex;
    align-items: center;
    gap: 4px;
    width: 452px;
    height: 36px;
    padding: 0 7px;
    border: 2px solid #e3e5e6;
    border-radius: 4px;
}

.search-icon {
    width: 20px;
    height: 20px;
    color: #808487;
}

.search-box input {
    flex: 1;
    min-width: 0;
    padding-left: 5px;
    outline: 0;
}

.vault {
    width: 21px;
    height: 21px;
}

.clear svg {
    display: block;
    width: 16px;
    height: 16px;
}

.check {
    display: flex;
    align-items: center;
    gap: 7px;
    white-space: nowrap;
}

.check input, .pick {
    width: 18px;
    height: 18px;
    border: 1px solid #d3d7da;
    border-radius: 3px;
    background-color: #fff;
    appearance: none;
}

.nationwide {
    margin-left: 24px;
}

.cart-btn {
    display: flex;
    align-items: center;
    justify-content: center;
    gap: 6px;
    min-width: 73px;
    height: 34px;
    margin-left: auto;
    border: 2px solid #b7cbea;
    border-radius: 4px;
    color: #9db9e2;
    font-size: 16px;
}

.cart-btn svg {
    width: 15px;
    height: 15px;
}

/* filters */
.filters {
    display: flex;
    align-items: center;
    gap: 8px;
    height: 45px;
    padding: 0 16px 0 14px;
    border-bottom: 1px solid #d9dbdd;
    color: #1f2224;
    white-space: nowrap;
}

.filter {
    height: 34px;
    padding: 0 7px;
    border: 1px solid #d6d9db;
    border-radius: 4px;
}

.add-filter, .chip {
    display: flex;
    align-items: center;
    gap: 10px;
}

.add-filter svg {
    width: 14px;
    height: 9px;
}

.chip {
    padding: 0 6px;
    border-color: #cdd4dc;
    background-color: #e9effb;
    color: #000;
    font-size: 14px;
    font-weight: 500;
}

.chip svg {
    width: 14px;
    height: 14px;
}

.filters-right {
    display: flex;
    align-items: center;
    gap: 16px;
    margin-left: auto;
    font-size: 16px;
}

.results {
    margin-right: 4px;
}

.clear-all {
    color: #3c63c8;
    font-size: 15px;
}

.toggle {
    display: flex;
    overflow: hidden;
    border: 1px solid #d6d9db;
    border-radius: 4px;
    font-size: 14px;
}

.toggle button {
    width: 49px;
    height: 22px;
}

.toggle .on {
    background-color: #d6d9d8;
    font-weight: 700;
}

/* map */
.content {
    display: flex;
    flex: 1;
    min-height: 0;
}

.map {
    position: relative;
    flex: 1;
    min-width: 0;
    overflow: hidden;
    background-color: #c3e1c9;
}

.map-svg {
    position: absolute;
    width: 100%;
    height: 100%;
    stroke-linejoin: round;
}

.zip-area {
    fill: #c9e5bb;
}

.zip-line {
    fill: none;
    stroke: #5f7a6c;
    stroke-width: 1.2;
}

.river {
    fill: none;
    stroke: #9dbce8;
    stroke-width: 0.8;
}

.minor {
    fill: none;
    stroke: #e6f3df;
    stroke-width: 0.9;
}

.white-road {
    fill: none;
    stroke: #fbfdf8;
    stroke-width: 1.8;
}

.hw-edge, .hw-fill, .i75-edge, .i75-fill, .i75-thin {
    fill: none;
    stroke: #e5bd69;
}

.hw-edge {
    stroke-width: 4;
}

.hw-fill {
    stroke: #fcebb0;
    stroke-width: 2;
}

.i75-edge {
    stroke-width: 6;
}

.i75-fill {
    stroke: #fcebb0;
    stroke-width: 3;
}

.i75-thin {
    stroke-width: 2;
}

.shield {
    font: 500 10px Roboto, sans-serif;
    text-anchor: middle;
    fill: #444;
}

.inter {
    fill: #fff;
    font-weight: 700;
}

.place {
    font: 14px Roboto, sans-serif;
    text-anchor: middle;
    fill: #222;
    stroke: #f4faf2;
    stroke-width: 2;
    paint-order: stroke;
}

.poi {
    fill: #677f78;
    stroke: #e3f1e0;
}

.teal {
    fill: #4f9096;
}

.green {
    fill: #4c8a5e;
}

.cluster {
    position: absolute;
    width: 60px;
    height: 60px;
    margin: -30px 0 0 -30px;
    border: 10px solid rgba(80, 130, 195, 0.45);
    border-radius: 50%;
    background-color: #3763d0;
    background-clip: padding-box;
    color: #fff;
    font: bold 13px "Liberation Sans", sans-serif;
}

.c1 { left: 250px; top: 257px; }
.c2 { left: 372px; top: 244px; }
.c3 { left: 507px; top: 257px; }
.c4 { left: 688px; top: 230px; }
.c5 { left: 151px; top: 372px; }
.c6 { left: 348px; top: 402px; }
.c7 { left: 507px; top: 423px; }
.c8 { left: 283px; top: 498px; }
.c9 { left: 645px; top: 510px; }
.c10 { left: 394px; top: 564px; }

.move-search {
    position: absolute;
    left: 50%;
    top: 13px;
    height: 35px;
    padding: 0 17px;
    border-radius: 3px;
    background-color: rgba(255, 255, 255, 0.97);
    box-shadow: 0 1px 5px rgba(0, 0, 0, 0.2);
    transform: translateX(-50%);
}

.move-search input {
    display: grid;
    place-content: center;
    width: 16px;
    height: 16px;
    border-color: #3763d0;
    background-color: #3763d0;
}

.move-search input::before {
    content: '';
    width: 9px;
    height: 5px;
    margin-bottom: 3px;
    border: solid #fff;
    border-width: 0 0 1px 1px;
    transform: rotate(-45deg);
}

.tools {
    position: absolute;
    left: 11px;
    top: 12px;
    display: flex;
    flex-direction: column;
    align-items: center;
    gap: 10px;
    width: 80px;
}

.tool {
    display: flex;
    flex-direction: column;
    align-items: center;
    justify-content: center;
    gap: 4px;
    width: 80px;
    height: 68px;
    padding: 0 2px 2px;
    border: 1px solid #dfe3e2;
    border-radius: 3px;
    background-color: #fdfdfd;
    box-shadow: 0 1px 3px rgba(0, 0, 0, 0.3);
    color: #4a4d50;
    font-size: 12px;
    line-height: 12px;
}

.tool svg {
    flex: none;
    width: 20px;
    height: 20px;
}

.tool-close {
    height: 48px;
    color: #222;
}

.tool-close svg {
    width: 17px;
    height: 17px;
}

.tool-off {
    border-color: transparent;
    background-color: rgba(255, 255, 255, 0.6);
    box-shadow: 0 1px 2px rgba(0, 0, 0, 0.15);
    color: #7d8f86;
}

.tool-on {
    padding: 0 10px 2px;
    border-color: #6580aa;
    background-color: #6580aa;
    color: #fff;
}

.tool:nth-child(8) {
    padding: 0 6px 2px;
}

.more-tools {
    width: 30px;
    height: 30px;
    margin-top: 4px;
    border-radius: 50%;
    background-color: #fdfdfd;
    box-shadow: 0 1px 3px rgba(0, 0, 0, 0.3);
}

.more-tools svg {
    display: block;
    width: 14px;
    height: 16px;
    margin: auto;
}

.map-controls {
    position: absolute;
    right: 11px;
    top: 10px;
    display: flex;
    flex-direction: column;
    gap: 10px;
}

.group {
    display: flex;
    flex-direction: column;
    width: 26px;
    border-radius: 4px;
    background-color: #fdfdfd;
    box-shadow: 0 1px 4px rgba(0, 0, 0, 0.5);
}

.group button {
    height: 26px;
}

.group button + button {
    border-top: 1px solid #ccc;
}

.group svg {
    display: block;
    width: 12px;
    height: 12px;
    margin: auto;
    fill: #3c3c3c;
}

.locate {
    width: 24px;
    height: 24px;
    border: 1px solid #666;
    border-radius: 3px;
    background-color: #fdfdfd;
}

.locate svg {
    display: block;
    width: 16px;
    height: 16px;
    margin: auto;
}

.layers {
    position: absolute;
    right: 11px;
    bottom: 30px;
    width: 36px;
    height: 36px;
    border-radius: 4px;
    background-color: #fdfdfd;
    box-shadow: 0 1px 4px rgba(0, 0, 0, 0.4);
}

.layers svg {
    display: block;
    width: 26px;
    height: 26px;
    margin: auto;
}

.pointer {
    position: absolute;
    left: 667px;
    top: 195px;
    width: 12px;
    height: 18px;
}

.google {
    position: absolute;
    left: 10px;
    bottom: 3px;
    font-size: 18px;
    line-height: 24px;
    font-weight: 700;
    color: #4285f4;
    text-shadow: 0 0 2px #fff, 0 0 2px #fff;
}

.google span:nth-child(2), .google span:nth-child(6) { color: #db4437; }
.google span:nth-child(3) { color: #e9b12c; }
.google span:nth-child(5) { color: #3b9a5b; }

.legal {
    position: absolute;
    right: 0;
    bottom: 0;
    display: flex;
    gap: 12px;
    padding: 0 7px 0 4px;
    background-color: rgba(232, 240, 232, 0.75);
    font: 10px/13px Roboto, sans-serif;
    color: #111;
}

/* property list */
.list {
    position: relative;
    display: flex;
    flex-direction: column;
    width: 349px;
    background-color: #fdfdfd;
}

.list-head {
    display: flex;
    align-items: center;
    height: 54px;
    padding: 0 10px 0 9px;
    border-bottom: 1px solid #d9dbdd;
}

.list-head .check {
    gap: 4px;
    font-size: 14px;
}

.sort {
    display: flex;
    align-items: center;
    gap: 12px;
    margin-left: auto;
    font-size: 14px;
}

.sort select {
    appearance: none;
}

.sort svg {
    width: 10px;
    height: 7px;
}

.sort-dir {
    width: 24px;
    height: 24px;
    margin-left: 13px;
    border: 1px solid #555;
    border-radius: 3px;
}

.sort-dir svg {
    display: block;
    width: 14px;
    height: 14px;
    margin: auto;
}

.cards {
    display: flex;
    flex: 1;
    flex-direction: column;
    gap: 10px;
    min-height: 0;
    padding: 16px 36px 0 27px;
    overflow: hidden;
}

.card {
    position: relative;
    display: flex;
    flex: none;
    align-items: center;
    min-height: 120px;
    padding: 10px 9px 12px 13px;
    border: 2px solid #d6dada;
    border-radius: 3px;
}

.pick {
    position: absolute;
    right: 9px;
    top: 16px;
}

.info {
    flex: 1;
    font-size: 12px;
    line-height: 16px;
    white-space: nowrap;
}

.info h3 {
    margin-bottom: 6px;
    font-size: 18px;
    line-height: 24px;
    color: #000;
}

.spec {
    font-size: 14px;
    color: #767a7d;
}

.addr {
    line-height: 14px;
}

.owner {
    margin-top: 7px;
    color: #4a4d50;
}

.addr-full {
    width: 184px;
    font-size: 14px;
    text-align: center;
}

.add {
    flex: none;
    width: 36px;
    height: 36px;
    margin-top: 10px;
    border: 1px solid #dcdfe1;
    border-radius: 50%;
    background-color: #fdfdfd;
    color: #000;
}

.add-short {
    margin-top: 26px;
}

.add-tall {
    margin-top: 0;
}

.add svg {
    display: block;
    width: 22px;
    height: 22px;
    margin: auto;
}

.scrollbar {
    position: absolute;
    right: 0;
    top: 54px;
    bottom: 0;
    width: 9px;
    background-color: #f0f0f0;
}

.scrollbar span {
    display: block;
    height: 46%;
    border-radius: 4px;
    background-color: #c2c4c4;
}

.help {
    position: absolute;
    right: 30px;
    bottom: 50px;
    width: 56px;
    height: 56px;
    border-radius: 50%;
    background-color: #3763d0;
    box-shadow: 0 1px 5px rgba(0, 0, 0, 0.3);
    color: #fff;
    font-size: 40px;
    font-weight: 700;
    line-height: 56px;
}
```
